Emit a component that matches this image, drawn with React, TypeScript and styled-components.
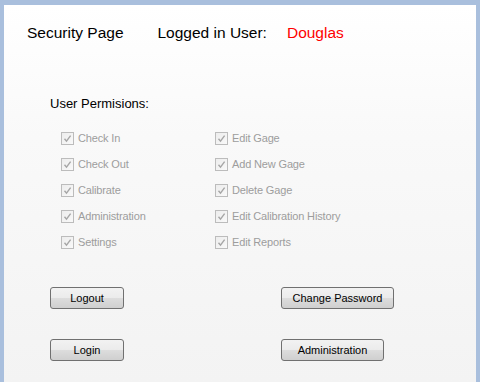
import React from 'react';
import styled, { createGlobalStyle } from 'styled-components';

const GlobalStyle = createGlobalStyle`
  html, body {
    margin: 0;
    padding: 0;
    width: 480px;
    height: 382px;
    overflow: hidden;
  }
  body {
    font-family: "Liberation Sans", Arial, sans-serif;
    background: #ffffff;
  }
`;

const Frame = styled.div`
  box-sizing: border-box;
  width: 480px;
  height: 382px;
  border-top: 5px solid #a9bfdd;
  border-left: 4px solid #a9bfdd;
  border-right: 4px solid #a9bfdd;
  background: linear-gradient(#ffffff 0%, #f9f9f9 35%, #f3f3f3 100%);
  display: flex;
  flex-direction: column;
`;

const Header = styled.div`
  display: flex;
  align-items: center;
  padding: 18px 0 0 23px;
  height: 20px;
  font-size: 15.5px;
  line-height: 20px;
  color: #000;
`;

const HeaderText = styled.span<{ $gap?: number; $red?: boolean }>`
  margin-left: ${(p) => p.$gap ?? 0}px;
  color: ${(p) => (p.$red ? '#ff0000' : '#000')};
`;

const Section = styled.div`
  padding-left: 46px;
  margin-top: 53px;
`;

const SectionTitle = styled.div`
  font-size: 13px;
  line-height: 16px;
  color: #000;
`;

const PermGrid = styled.div`
  display: grid;
  grid-template-columns: 154px 154px;
  grid-auto-rows: 26px;
  margin-top: 13px;
  padding-left: 57px;
`;

const PermItem = styled.label`
  display: flex;
  align-items: center;
  font-size: 11px;
  letter-spacing: -0.15px;
  color: #9d9d9d;
`;

const Box = styled.span`
  box-sizing: border-box;
  width: 13px;
  height: 13px;
  border: 1px solid #bcbcbc;
  background: linear-gradient(135deg, #ededed, #f9f9f9);
  display: inline-flex;
  align-items: center;
  justify-content: center;
  margin-right: 4px;
  flex: none;
`;

const Buttons = styled.div`
  display: grid;
  grid-template-columns: 231px auto;
  grid-auto-rows: 22px;
  row-gap: 30px;
  padding-left: 46px;
  margin-top: 32px;
  justify-items: start;
`;

const Button = styled.button<{ $w: number }>`
  box-sizing: border-box;
  width: ${(p) => p.$w}px;
  height: 22px;
  border: 1px solid #707070;
  border-radius: 3px;
  background: linear-gradient(#f2f2f2 0%, #ebebeb 50%, #dddddd 51%, #cfcfcf 100%);
  font-family: "Liberation Sans", Arial, sans-serif;
  font-size: 11px;
  color: #000;
  padding: 0;
  cursor: pointer;
`;

const Check = () => (
  <svg width="9" height="9" viewBox="0 0 9 9">
    <path d="M1.5 4.8 L3.5 7.2 L7.6 1.6" fill="none" stroke="#a6a6a6" strokeWidth="1.4" />
  </svg>
);

const permissions = [
  ['Check In', 'Edit Gage'],
  ['Check Out', 'Add New Gage'],
  ['Calibrate', 'Delete Gage'],
  ['Administration', 'Edit Calibration History'],
  ['Settings', 'Edit Reports'],
];

export default function App() {
  return (
    <>
      <GlobalStyle />
      <Frame>
        <Header>
          <HeaderText>Security Page</HeaderText>
          <HeaderText $gap={34}>Logged in User:</HeaderText>
          <HeaderText $gap={20} $red>Douglas</HeaderText>
        </Header>
        <Section>
          <SectionTitle>User Permisions:</SectionTitle>
        </Section>
        <PermGrid>
          {permissions.flat().map((name) => (
            <PermItem key={name}>
              <Box>
                <Check />
              </Box>
              {name}
            </PermItem>
          ))}
        </PermGrid>
        <Buttons>
          <Button $w={74}>Logout</Button>
          <Button $w={113}>Change Password</Button>
          <Button $w={74}>Login</Button>
          <Button $w={103}>Administration</Button>
        </Buttons>
      </Frame>
    </>
  );
}
